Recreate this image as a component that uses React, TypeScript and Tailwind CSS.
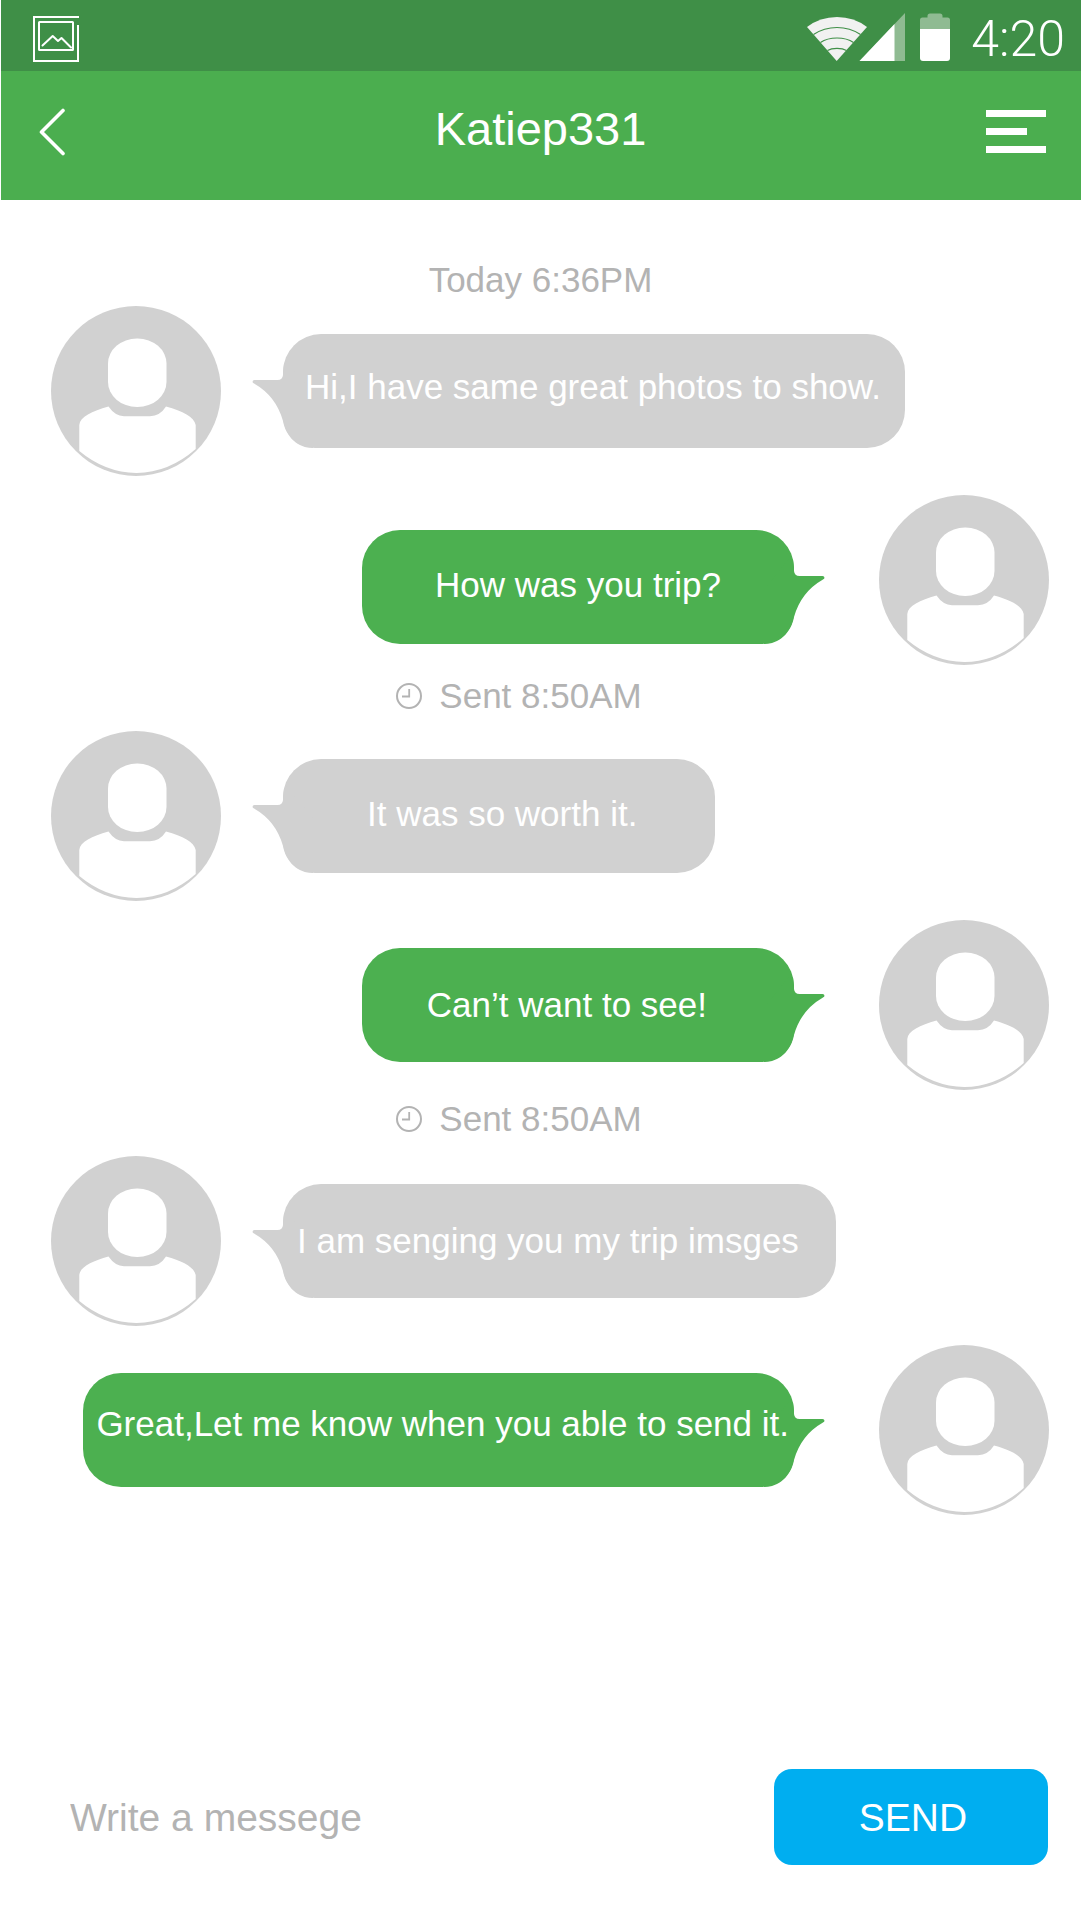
import React from "react";

type Message = {
  from: "them" | "me";
  text: string;
  pad: string;
  top: string;
};

function GalleryIcon() {
  return (
    <svg width="46" height="46" viewBox="0 0 46 46" fill="none" stroke="#fff" strokeWidth="2" aria-hidden="true">
      <path d="M46 1H1V45H45V9" />
      <rect x="6" y="6" width="34" height="28" rx="0.5" />
      <path d="M9.5 29.5 19.7 20 25 25 28.5 22 38 31.5" strokeLinecap="round" strokeLinejoin="round" />
    </svg>
  );
}

function SignalIcons() {
  return (
    <svg width="98" height="48" viewBox="0 0 98 48" aria-hidden="true">
      <path d="M0 14Q13 4 30 4T60 14L29.700 48Z" fill="#f1f1f1" />
      <g fill="none" stroke="#3f8f47" strokeWidth="1.200">
        <path d="M6.500 21.500Q17 14.500 30 14.500T53.500 21.500" />
        <path d="M13.500 29.500Q20 25 30 25T46.500 29.500" />
        <path d="M20.500 37.500Q24 35.400 30 35.400T39.500 37.500" />
      </g>
      <path d="M52.500 48 98 0V48Z" fill="#8fbb92" />
      <path d="M52.500 48 87.500 11V48Z" fill="#fff" />
    </svg>
  );
}

function BatteryIcon() {
  return (
    <svg width="30" height="48" viewBox="0 0 30 48" aria-hidden="true">
      <path d="M0 7Q0 4.500 2.500 4.500H7.500V3Q7.500 0.500 10 0.500H20Q22.500 0.500 22.500 3V4.500H27.500Q30 4.500 30 7V17H0Z" fill="#8fbb92" />
      <path d="M0 16H30V45Q30 48 27 48H3Q0 48 0 45Z" fill="#fff" />
    </svg>
  );
}

function Avatar() {
  return (
    <svg className="shrink-0" width="170" height="170" viewBox="0 0 170 170" role="img" aria-label="Profile picture">
      <circle cx="85" cy="85" r="85" fill="#d1d1d1" />
      <rect x="57" y="32.500" width="58.500" height="68.500" rx="29" ry="25" fill="#fff" />
      <path
        d="M28.300 145V119C29 111 41 105 57.500 100.500Q64 110 73 110.200H99Q109 110 115 100.500C132 105 143 111 144.700 119V143Q118 166.500 85.500 167Q54 166.500 28.300 145Z"
        fill="#fff"
      />
    </svg>
  );
}

function ClockIcon() {
  return (
    <svg width="26" height="26" viewBox="0 0 26 26" fill="none" stroke="#b3b3b3" aria-hidden="true">
      <circle cx="13" cy="13" r="12" strokeWidth="2" />
      <path d="M13.200 6V13.500H6" strokeWidth="1.800" />
    </svg>
  );
}

function Tail() {
  return (
    <svg width="62" height="114" viewBox="0 0 62 114" fill="currentColor" aria-hidden="true">
      <path d="M34 26C31.500 31 31 36 31 41Q30.500 46 25.500 46H2.500Q0.500 46 0.500 48Q0.700 48.800 2 49.500Q24 62 31 87C34 103 46 114 61 114V60Z" />
    </svg>
  );
}

function Bubble({ message }: { message: Message }) {
  const mine = message.from === "me";
  return (
    <div className={`relative ${message.top} ${mine ? "mr-[85px] text-[#4cb050]" : "ml-[62px] text-[#d1d1d1]"}`}>
      <div className={`absolute top-0 ${mine ? "-right-[31px] -scale-x-100" : "-left-[31px]"}`}>
        <Tail />
      </div>
      <div className={`${mine ? "rounded-[38px] rounded-br-[32px]" : "rounded-[38px] rounded-bl-[32px]"} bg-current ${message.pad}`}>
        <p className="relative text-[35px] leading-10 text-white">{message.text}</p>
      </div>
    </div>
  );
}

function MessageRow({ message }: { message: Message }) {
  const mine = message.from === "me";
  return (
    <li className={`flex items-start ${mine ? "mt-[19px] justify-end" : ""}`}>
      {!mine && <Avatar />}
      <Bubble message={message} />
      {mine && <Avatar />}
    </li>
  );
}

function SentStamp({ className }: { className: string }) {
  return (
    <li className={`flex h-[66px] items-center justify-center gap-[17px] pr-[62px] text-[35px] leading-10 text-[#b3b3b3] ${className}`}>
      <ClockIcon />
      <span>Sent 8:50AM</span>
    </li>
  );
}

const messages: Message[] = [
  { from: "them", text: "Hi,I have same great photos to show.", pad: "pl-[22px] pr-6 pt-[33px] pb-[41px]", top: "mt-7" },
  { from: "me", text: "How was you trip?", pad: "px-[73px] pt-[35px] pb-[39px]", top: "mt-[35px]" },
  { from: "them", text: "It was so worth it.", pad: "pl-[84px] pr-[78px] pt-[35px] pb-[39px]", top: "mt-7" },
  { from: "me", text: "Can’t want to see!", pad: "pl-[65px] pr-[87px] py-[37px]", top: "mt-7" },
  { from: "them", text: "I am senging you my trip imsges", pad: "pl-[14px] pr-[37px] py-[37px]", top: "mt-7" },
  { from: "me", text: "Great,Let me know when you able to send it.", pad: "pl-[13px] pr-[5px] pt-[31px] pb-[43px]", top: "mt-7" },
];

export default function App() {
  return (
    <div className="flex min-h-screen flex-col bg-white font-['Liberation_Sans',Arial,sans-serif]">
      <div className="ml-px flex h-[71px] items-center justify-between bg-[#3f8f47] pr-4 pl-8">
        <div className="pt-[7px]">
          <GalleryIcon />
        </div>
        <div className="flex items-center gap-[15px]">
          <div className="pt-[3px]">
            <SignalIcons />
          </div>
          <div className="pt-[3px]">
            <BatteryIcon />
          </div>
          <time className="ml-[6px] pt-[6px] font-['Roboto',sans-serif] text-[50px] leading-[60px] font-light text-white">4:20</time>
        </div>
      </div>

      <header className="ml-px grid h-[129px] grid-cols-[1fr_auto_1fr] items-center bg-[#4bae4f] pr-[35px] pb-2 pl-[38px] text-white">
        <button type="button" aria-label="Back" className="justify-self-start">
          <svg width="27" height="48" viewBox="0 0 27 48" fill="none" stroke="currentColor" strokeWidth="3.600" strokeLinecap="round" strokeLinejoin="round">
            <path d="M24 2.500 2.500 24 24 45.500" />
          </svg>
        </button>
        <h1 className="pr-1 pb-[6px] text-[47px] leading-[56px]">Katiep331</h1>
        <button type="button" aria-label="Menu" className="flex flex-col gap-[11px] justify-self-end">
          <span className="h-[7px] w-[60px] bg-white" />
          <span className="h-[7px] w-[41px] bg-white" />
          <span className="h-[7px] w-[60px] bg-white" />
        </button>
      </header>

      <main className="flex flex-1 flex-col">
        <p className="pt-[60px] text-center text-[35px] leading-10 text-[#b3b3b3]">Today 6:36PM</p>
        <ul className="mt-[6px] pr-8 pl-[51px]">
          <MessageRow message={messages[0]} />
          <MessageRow message={messages[1]} />
          <SentStamp className="pb-1" />
          <MessageRow message={messages[2]} />
          <MessageRow message={messages[3]} />
          <SentStamp className="pb-2" />
          <MessageRow message={messages[4]} />
          <MessageRow message={messages[5]} />
        </ul>
      </main>

      <form className="flex items-center pr-[33px] pb-14 pl-[70px] text-[39px]" onSubmit={(e) => e.preventDefault()}>
        <input
          type="text"
          aria-label="Message"
          placeholder="Write a messege"
          className="h-24 min-w-0 flex-1 bg-transparent pt-[2px] text-[#333] outline-none placeholder:text-[#b3b3b3] placeholder:opacity-100"
        />
        <button type="submit" className="h-24 w-[274px] rounded-[18px] bg-[#00aef0] pt-[2px] pl-1 text-white">
          SEND
        </button>
      </form>
    </div>
  );
}
